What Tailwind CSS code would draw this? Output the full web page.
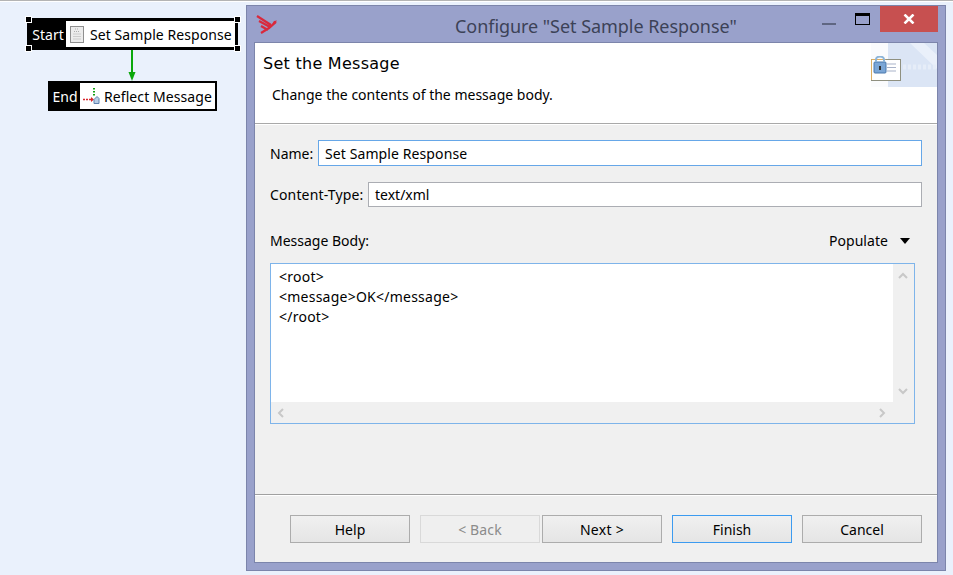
<!DOCTYPE html>
<html><head><meta charset="utf-8">
<script src="https://cdn.jsdelivr.net/npm/@tailwindcss/browser@4"></script>
<title>Configure</title></head>
<body class="m-0 w-[953px] h-[575px] overflow-hidden relative bg-[#eaf1fc] font-['Noto_Sans','Open_Sans',sans-serif] text-[14px] leading-none text-black">
<div class="absolute left-0 top-0 w-full h-[2px] border-t border-[#b4b4b4] bg-white"></div>

<!-- diagram -->
<div class="absolute left-[27px] top-[18px] w-[211px] h-[32px] bg-black border-[3px] border-black flex items-stretch">
  <span class="w-[36px] flex items-center justify-center text-white pt-[1px]">Start</span>
  <div class="flex-1 bg-white flex items-center pl-[4px] gap-[6px] whitespace-nowrap">
    <svg width="14" height="17" viewBox="0 0 14 17"><rect x=".5" y=".5" width="13" height="16" fill="#ececec" stroke="#8f8f8f"/><path d="M5 3h4M4 5.500h6M3.500 8h7M3.500 10.500h7M3.500 13h7" stroke="#adadad" stroke-dasharray="1 1"/></svg>
    <span class="tracking-[0.08px] pt-[1px]">Set Sample Response</span>
  </div>
</div>
<i class="absolute left-[26px] top-[17px] w-[5px] h-[5px] bg-black outline outline-white"></i>
<i class="absolute left-[26px] top-[46px] w-[5px] h-[5px] bg-black outline outline-white"></i>
<i class="absolute left-[235px] top-[17px] w-[5px] h-[5px] bg-black outline outline-white"></i>
<i class="absolute left-[235px] top-[46px] w-[5px] h-[5px] bg-black outline outline-white"></i>
<svg class="absolute left-[126px] top-[50px]" width="12" height="32" viewBox="0 0 12 32"><path d="M6 0V24" stroke="#0ba80b" stroke-width="2"/><path d="M2.500 22h7L6 31z" fill="#0ba80b"/></svg>
<div class="absolute left-[48px] top-[81px] w-[169px] h-[30px] bg-black border-[2px] border-black flex items-stretch">
  <span class="w-[30px] flex items-center justify-center text-white pt-[1px]">End</span>
  <div class="flex-1 bg-white flex items-center pl-[3px] gap-[1px] whitespace-nowrap">
    <svg width="20" height="22" viewBox="0 0 20 22"><path d="M11 3v8" stroke="#12a012" stroke-width="2" stroke-dasharray="1.500 1.500"/><path d="M0 14.500h8" stroke="#d8262c" stroke-width="1.500" stroke-dasharray="2 1"/><path d="M8 12l3 2.500-3 2.500z" fill="#d8262c"/><path d="M11 18.500v-4l3-3 2 2v5z" fill="#b8cde6" stroke="#5f83b0"/></svg>
    <span class="tracking-[0.08px] pt-[1px]">Reflect Message</span>
  </div>
</div>

<!-- dialog window -->
<section class="absolute left-[246px] top-[5px] w-[700px] h-[566px] border border-[#7c85ab] bg-[#99a1cb] flex flex-col">
  <header class="h-[36px] shrink-0 flex items-start relative">
    <svg class="ml-[9px] mt-[8px]" width="22" height="22" viewBox="0 0 22 22" fill="none" stroke="#d9293c" stroke-width="2.200"><path d="M1 2l14 9M3 7l11 6M5 12l7 4M5 19l8-5 7-6"/><path d="M16 10l2-3 3-.5-2 3z" fill="#d9293c" stroke="none"/></svg>
    <h1 class="absolute left-[208px] top-[10px] text-[18px] leading-[20px] tracking-[-0.05px] font-normal text-[#3c4257] whitespace-nowrap">Configure "Set Sample Response"</h1>
    <div class="ml-auto mr-[7px] flex items-start">
      <svg class="mt-[17px] mr-[19px]" width="14" height="3"><rect width="14" height="2" y="0" fill="#5f6682"/></svg>
      <svg class="mt-[7px] mr-[10px]" width="15" height="12"><rect x=".5" y=".5" width="14" height="11" fill="none" stroke="#000"/><rect width="15" height="3" fill="#000"/></svg>
      <div class="w-[58px] h-[26px] bg-[#c75050] flex items-center justify-center">
        <svg width="12" height="10" viewBox="0 0 12 10"><path d="M1.500 .5l9 9M10.500 .5l-9 9" stroke="#fff" stroke-width="2.500" fill="none"/></svg>
      </div>
    </div>
  </header>
  <div class="ml-[7px] mr-[7px] mb-[7px] flex-1 flex flex-col border border-[#7c85ab] bg-[#f0f0f0] min-h-0">
    <!-- banner -->
    <div class="h-[81px] shrink-0 bg-white border-b border-[#a9a9a9] relative">
      <svg class="absolute right-0 top-0" width="66" height="44" viewBox="0 0 66 44"><rect width="17" height="44" fill="#fafbfd"/><rect x="17" width="49" height="44" fill="#dbe5f5"/><path d="M39 0h14l13 12v14z" fill="#eaf0fa"/><path d="M32 24h34" stroke="#e6edf8" stroke-width="5" stroke-dasharray="3 2"/></svg>
      <svg class="absolute right-[35px] top-[13px]" width="31" height="26" viewBox="0 0 31 26"><rect x=".5" y="3.500" width="29" height="21" fill="#fff" stroke="#8f9080"/><path d="M.5 24V3.500h14" fill="none" stroke="#dcae62"/><path d="M16 8h9M16 11.500h9M16 15h9" stroke="#a9b3c9"/><rect x="3" y="6" width="12" height="11" rx="1" fill="#7ba6d6" stroke="#4b79ad"/><path d="M5 6V3.500a4 3 0 0 1 8 0V6" fill="none" stroke="#8cb4d8" stroke-width="2"/><rect x="8" y="10" width="2" height="4" fill="#333"/></svg>
      <h2 class="absolute left-[8px] top-[12px] font-['DejaVu_Sans',sans-serif] text-[16px] leading-[18px] tracking-[0.27px] font-normal">Set the Message</h2>
      <p class="absolute left-[17px] top-[43px] leading-[18px]">Change the contents of the message body.</p>
    </div>
    <div class="h-px bg-white shrink-0"></div>
    <!-- form -->
    <div class="flex-1 flex flex-col pl-[15px] pr-[15px] min-h-0">
      <div class="flex items-center mt-[15px] h-[26px]">
        <label class="w-[48px] pt-[1px]">Name:</label>
        <div class="flex-1 h-[26px] bg-white border border-[#66a7e8] px-[6px] pt-[1px] flex items-center tracking-[0.1px]">Set Sample Response</div>
      </div>
      <div class="flex items-center mt-[16px] h-[25px]">
        <label class="w-[98px] tracking-[0.15px]">Content-Type:</label>
        <div class="flex-1 h-[25px] bg-white border border-[#abadb3] px-[6px] flex items-center">text/xml</div>
      </div>
      <div class="flex items-center h-[20px] mt-[24px] pr-[12px]">
        <label>Message Body:</label>
        <span class="ml-auto tracking-[0.05px]">Populate</span>
        <svg class="ml-[12px]" width="10" height="6"><path d="M0 0h10L5 6z" fill="#000"/></svg>
      </div>
      <div class="mt-[12px] mr-[7px] h-[161px] border border-[#7eb4ea] bg-[#f0f0f0] grid grid-cols-[1fr_21px] grid-rows-[1fr_21px]">
        <pre class="bg-white m-0 pl-[8px] pt-[3px] font-['Noto_Sans','Open_Sans',sans-serif] text-[14px] leading-[20px] tracking-[0.24px]">&lt;root&gt;
&lt;message&gt;OK&lt;/message&gt;
&lt;/root&gt;</pre>
        <div class="row-span-2 flex flex-col items-center pt-[8px] pb-[28px] justify-between pr-[2px]">
          <svg width="10" height="7" viewBox="0 0 10 7"><path d="M1 6l4-4 4 4" fill="none" stroke="#c8c8c8" stroke-width="2"/></svg>
          <svg width="10" height="7" viewBox="0 0 10 7"><path d="M1 1l4 4 4-4" fill="none" stroke="#c8c8c8" stroke-width="2"/></svg>
        </div>
        <div class="flex items-center justify-between pl-[6px] pr-[7px]">
          <svg width="7" height="10" viewBox="0 0 7 10"><path d="M6 1L2 5l4 4" fill="none" stroke="#c8c8c8" stroke-width="2"/></svg>
          <svg width="7" height="10" viewBox="0 0 7 10"><path d="M1 1l4 4-4 4" fill="none" stroke="#c8c8c8" stroke-width="2"/></svg>
        </div>
      </div>
    </div>
    <!-- footer -->
    <div class="h-[68px] shrink-0 border-t border-[#a0a0a0] flex items-start justify-end pr-[15px] pt-[20px] shadow-[inset_0_1px_0_#fff]">
      <button class="w-[120px] h-[28px] pt-[2px] border border-[#acacac] bg-[linear-gradient(#f0f0f0,#e5e5e5)]">Help</button>
      <button class="ml-[10px] w-[120px] h-[28px] pt-[2px] border border-[#d9d9d9] bg-[#efefef] text-[#8b8b8b] tracking-[0.15px]">&lt; Back</button>
      <button class="ml-[2px] w-[120px] h-[28px] pt-[2px] border border-[#acacac] bg-[linear-gradient(#f0f0f0,#e5e5e5)] tracking-[0.3px]">Next &gt;</button>
      <button class="ml-[10px] w-[120px] h-[28px] pt-[2px] border border-[#3c9bf0] bg-[linear-gradient(#f0f0f0,#e5e5e5)]">Finish</button>
      <button class="ml-[10px] w-[120px] h-[28px] pt-[2px] border border-[#acacac] bg-[linear-gradient(#f0f0f0,#e5e5e5)]">Cancel</button>
    </div>
  </div>
</section>
</body></html>
